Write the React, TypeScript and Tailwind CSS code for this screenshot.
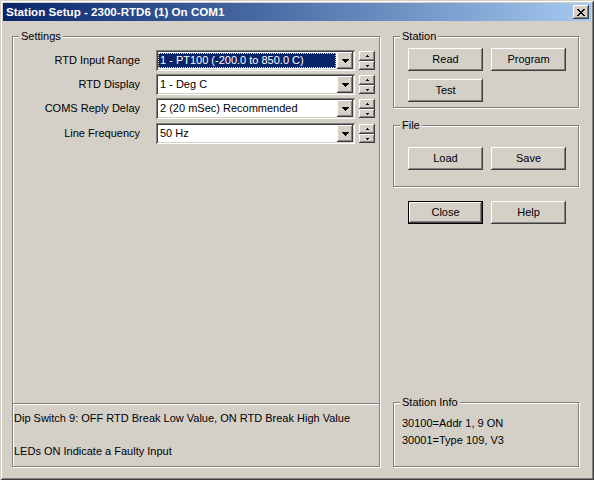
import type { ReactNode } from 'react'

const raised =
  'shadow-[inset_-1px_-1px_0_#404040,inset_1px_1px_0_#ffffff,inset_-2px_-2px_0_#808080,inset_2px_2px_0_#d4d0c8]'
const sunken =
  'shadow-[inset_1px_1px_0_#808080,inset_-1px_-1px_0_#ffffff,inset_2px_2px_0_#404040,inset_-2px_-2px_0_#d4d0c8]'
const etched = 'border border-[#808080] shadow-[1px_1px_0_#ffffff,inset_1px_1px_0_#ffffff]'

const SETTINGS = [
  { label: 'RTD Input Range', value: '1 - PT100 (-200.0 to 850.0 C)', selected: true },
  { label: 'RTD Display', value: '1 - Deg C' },
  { label: 'COMS Reply Delay', value: '2 (20 mSec) Recommended' },
  { label: 'Line Frequency', value: '50 Hz' },
]

function GroupBox({ label, className, children }: { label: string; className: string; children?: ReactNode }) {
  return (
    <div className={`relative ${etched} ${className}`}>
      <span className="absolute -top-[7px] left-[6px] bg-[#d4d0c8] px-[2px] leading-[13px]">{label}</span>
      {children}
    </div>
  )
}

function Button({ children, isDefault }: { children: ReactNode; isDefault?: boolean }) {
  if (isDefault) {
    return (
      <div className="h-[23px] w-[75px] border border-black">
        <div className={`flex h-full w-full items-center justify-center ${raised}`}>{children}</div>
      </div>
    )
  }
  return <div className={`flex h-[23px] w-[75px] items-center justify-center ${raised}`}>{children}</div>
}

function DownArrow() {
  return (
    <svg width="7" height="4" viewBox="0 0 7 4" shapeRendering="crispEdges">
      <path d="M0 0h7v1H0zM1 1h5v1H1zM2 2h3v1H2zM3 3h1v1H3z" fill="#000" />
    </svg>
  )
}

function Combo({ value, selected }: { value: string; selected?: boolean }) {
  return (
    <div className={`flex h-[21px] w-[199px] bg-white p-[2px] ${sunken}`}>
      <div className="flex min-w-0 flex-1 py-[1px] pr-[1px]">
        <div
          className={`flex flex-1 items-center whitespace-nowrap border border-dotted pl-[1px] leading-[13px] ${
            selected ? 'border-[#f5db95] bg-[#0a246a] text-white' : 'border-transparent'
          }`}
        >
          {value}
        </div>
      </div>
      <div className={`flex h-[17px] w-[16px] items-center justify-center bg-[#d4d0c8] ${raised}`}>
        <DownArrow />
      </div>
    </div>
  )
}

function Spinner() {
  return (
    <div className="ml-[4px] mt-[1px] flex flex-col self-start">
      <div className={`flex h-[10px] w-[16px] items-center justify-center ${raised}`}>
        <svg width="3" height="2" viewBox="0 0 3 2" shapeRendering="crispEdges">
          <path d="M1 0h1v1H1zM0 1h3v1H0z" fill="#000" />
        </svg>
      </div>
      <div className={`flex h-[9px] w-[16px] items-center justify-center ${raised}`}>
        <svg width="3" height="2" viewBox="0 0 3 2" shapeRendering="crispEdges">
          <path d="M0 0h3v1H0zM1 1h1v1H1z" fill="#000" />
        </svg>
      </div>
    </div>
  )
}

export default function App() {
  return (
    <div
      className="flex h-[480px] w-[594px] flex-col bg-[#d4d0c8] p-[3px] font-['Liberation_Sans',Arial,sans-serif] text-[11px] text-black shadow-[inset_1px_1px_0_#d4d0c8,inset_-1px_-1px_0_#404040,inset_2px_2px_0_#ffffff,inset_-2px_-2px_0_#808080]"
    >
      {/* Title bar */}
      <div className="flex h-[18px] items-center bg-linear-to-r from-[#0a246a] to-[#a6caf0] pl-[3px] pr-[2px]">
        <span className="flex-1 whitespace-nowrap text-[11.6px] font-bold text-white">
          Station Setup - 2300-RTD6 (1) On COM1
        </span>
        <div className={`flex h-[14px] w-[16px] items-center justify-center bg-[#d4d0c8] ${raised}`}>
          <svg width="8" height="7" viewBox="0 0 8 7" shapeRendering="crispEdges">
            <path
              d="M0 0h2v1H0zM6 0h2v1H6zM1 1h2v1H1zM5 1h2v1H5zM2 2h4v1H2zM3 3h2v1H3zM2 4h4v1H2zM1 5h2v1H1zM5 5h2v1H5zM0 6h2v1H0zM6 6h2v1H6z"
              fill="#000"
            />
          </svg>
        </div>
      </div>

      {/* Body */}
      <div className="flex pl-[9px] pt-[15px]">
        <GroupBox label="Settings" className="flex h-[431px] w-[368px] flex-col">
          <div className="flex flex-col gap-[3px] pt-[13px]">
            {SETTINGS.map((s, i) => (
              <div key={s.label} className={`flex h-[21px] items-center ${i === 3 ? 'mt-[1px]' : ''}`}>
                <span className="w-[127px] text-right">{s.label}</span>
                <div className="ml-[16px]">
                  <Combo value={s.value} selected={s.selected} />
                </div>
                <Spinner />
              </div>
            ))}
          </div>
          <div className="mt-auto border-t border-[#808080] shadow-[inset_0_1px_0_#ffffff] pb-[8px] pt-[8px]">
            <div className="pl-[1px] leading-[13px]">Dip Switch 9: OFF RTD Break Low Value, ON RTD Break High Value</div>
            <div className="mt-[20px] pl-[1px] leading-[13px]">LEDs ON Indicate a Faulty Input</div>
          </div>
        </GroupBox>

        <div className="ml-[13px] flex h-[431px] w-[186px] flex-col">
          <GroupBox label="Station" className="h-[72px] w-[186px] pl-[14px] pt-[11px]">
            <div className="flex gap-[8px]">
              <Button>Read</Button>
              <Button>Program</Button>
            </div>
            <div className="mt-[8px]">
              <Button>Test</Button>
            </div>
          </GroupBox>

          <GroupBox label="File" className="mt-[17px] h-[62px] w-[186px] pl-[14px] pt-[21px]">
            <div className="flex gap-[8px]">
              <Button>Load</Button>
              <Button>Save</Button>
            </div>
          </GroupBox>

          <div className="mt-[14px] flex gap-[8px] pl-[15px]">
            <Button isDefault>Close</Button>
            <Button>Help</Button>
          </div>

          <GroupBox label="Station Info" className="mt-auto h-[65px] w-[186px] pl-[8px] pt-[14px]">
            <div className="leading-[13px]">30100=Addr 1, 9 ON</div>
            <div className="mt-[4px] leading-[13px]">30001=Type 109, V3</div>
          </GroupBox>
        </div>
      </div>
    </div>
  )
}
